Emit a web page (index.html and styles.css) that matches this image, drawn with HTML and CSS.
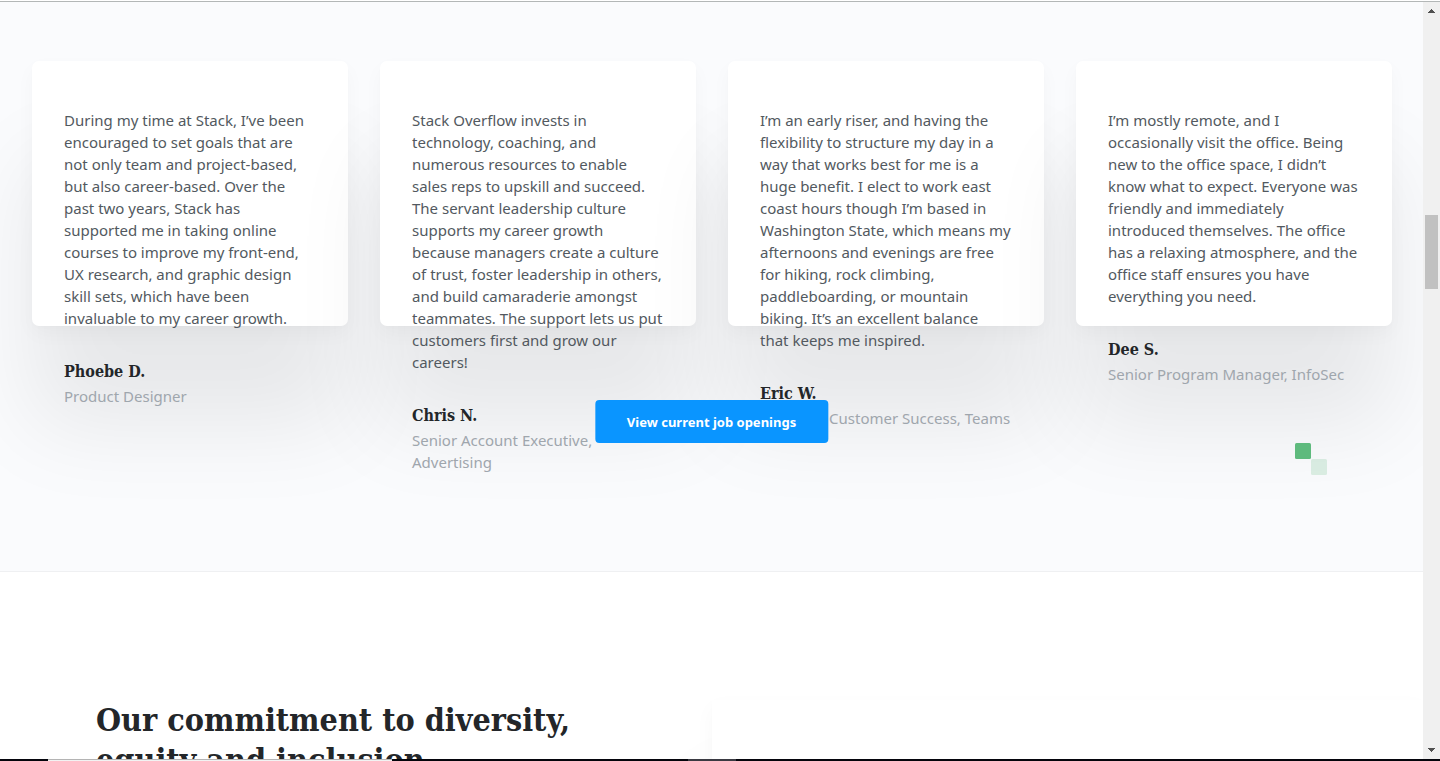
FILE: index.html
```html
<!DOCTYPE html>
<html lang="en">
<head>
<meta charset="utf-8">
<title>Working at Stack Overflow</title>
<link rel="stylesheet" href="styles.css">
</head>
<body>
<div class="window">
  <main class="page">
    <section class="testimonials">
      <ul class="cards">
        <li class="card">
          <p class="quote">During my time at Stack, I’ve been<br>encouraged to set goals that are<br>not only team and project-based,<br>but also career-based. Over the<br>past two years, Stack has<br>supported me in taking online<br>courses to improve my front-end,<br>UX research, and graphic design<br>skill sets, which have been<br>invaluable to my career growth.</p>
          <h3 class="name">Phoebe D.</h3>
          <p class="role">Product Designer</p>
        </li>
        <li class="card">
          <p class="quote">Stack Overflow invests in<br>technology, coaching, and<br>numerous resources to enable<br>sales reps to upskill and succeed.<br>The servant leadership culture<br>supports my career growth<br>because managers create a culture<br>of trust, foster leadership in others,<br>and build camaraderie amongst<br>teammates. The support lets us put<br>customers first and grow our<br>careers!</p>
          <h3 class="name">Chris N.</h3>
          <p class="role">Senior Account Executive,<br>Advertising</p>
        </li>
        <li class="card">
          <p class="quote">I’m an early riser, and having the<br>flexibility to structure my day in a<br>way that works best for me is a<br>huge benefit. I elect to work east<br>coast hours though I’m based in<br>Washington State, which means my<br>afternoons and evenings are free<br>for hiking, rock climbing,<br>paddleboarding, or mountain<br>biking. It’s an excellent balance<br>that keeps me inspired.</p>
          <h3 class="name">Eric W.</h3>
          <p class="role">Manager, Customer Success, Teams</p>
        </li>
        <li class="card">
          <p class="quote">I’m mostly remote, and I<br>occasionally visit the office. Being<br>new to the office space, I didn’t<br>know what to expect. Everyone was<br>friendly and immediately<br>introduced themselves. The office<br>has a relaxing atmosphere, and the<br>office staff ensures you have<br>everything you need.</p>
          <h3 class="name">Dee S.</h3>
          <p class="role">Senior Program Manager, InfoSec</p>
        </li>
      </ul>
      <a class="button" href="#openings">View current job openings</a>
      <svg class="squares" width="32" height="32" viewBox="0 0 32 32" aria-hidden="true">
        <rect width="16" height="16" rx="1.5" fill="#5eba7d"/>
        <rect x="16" y="16" width="16" height="16" rx="1.5" fill="#5eba7d" opacity=".2"/>
      </svg>
    </section>
    <section class="commitment">
      <h2 class="headline">Our commitment to diversity,<br>equity and inclusion</h2>
      <div class="panel"></div>
    </section>
  </main>
  <div class="scrollbar" aria-hidden="true">
    <svg class="arrow" width="7" height="4" viewBox="0 0 7 4"><path d="M3 0h1v1h1v1h1v1h1v1H0V3h1V2h1V1h1z"/></svg>
    <div class="track"><div class="thumb"></div></div>
    <svg class="arrow" width="7" height="4" viewBox="0 0 7 4"><path d="M0 0h7v1H6v1H5v1H4v1H3V3H2V2H1V1H0z"/></svg>
  </div>
</div>
<div class="taskbar" aria-hidden="true">
  <div class="search"></div>
  <div class="task"></div>
</div>
</body>
</html>
```
FILE: styles.css
```css
* { box-sizing: border-box; }

body {
  margin: 0;
  height: 100vh;
  display: flex;
  flex-direction: column;
  overflow: hidden;
  font-family: "Noto Sans", sans-serif;
  font-size: 15px;
  line-height: 22px;
  color: #525960;
  background: #fff;
}

.window {
  flex: 1;
  min-height: 0;
  display: flex;
  border-top: 1px solid #fff;
}

.page {
  flex: 1;
  min-width: 0;
  overflow: hidden;
  border-top: 1px solid #b3b7b7;
}

.testimonials {
  position: relative;
  padding: 59px 31px 245px 32px;
  background: #fafbfd;
  border-bottom: 1px solid #eff0f2;
}

.cards {
  display: grid;
  grid-template-columns: repeat(4, minmax(0, 1fr));
  gap: 32px;
  margin: 0;
  padding: 0;
  list-style: none;
}

.card {
  height: 265px;
  padding: 48px 32px;
  white-space: nowrap;
  background: #fff;
  border-radius: 7px;
}

.card,
.panel {
  box-shadow:
    0 2px 4px rgba(0, 0, 0, .01),
    0 8px 20px rgba(0, 0, 0, .03),
    0 100px 90px rgba(0, 0, 0, .08);
}

.quote { margin: 0 0 32px; }

.name {
  margin: 0;
  font-family: "DejaVu Serif Condensed", "DejaVu Serif", serif;
  font-size: 16px;
  line-height: 22px;
  color: #232629;
}

.role {
  margin: 2px 0 0;
  color: #9fa6ad;
}

.button {
  position: absolute;
  left: 50%;
  bottom: 128px;
  transform: translateX(-50%);
  padding: 11px 32px 10px;
  font-size: 13px;
  font-weight: 700;
  white-space: nowrap;
  color: #fff;
  text-decoration: none;
  background: #0a95ff;
  border-radius: 4px;
}

.squares {
  position: absolute;
  right: 96px;
  bottom: 96px;
}

.commitment {
  display: grid;
  grid-template-columns: 1fr 1fr;
  padding-top: 128px;
}

.headline {
  margin: 0;
  padding-left: 96px;
  font-family: "DejaVu Serif Condensed", "DejaVu Serif", serif;
  font-size: 32px;
  line-height: 40px;
  white-space: nowrap;
  color: #232629;
}

.panel {
  height: 320px;
  background: #fff;
}

.scrollbar {
  width: 17px;
  display: flex;
  flex-direction: column;
  align-items: center;
  padding: 7px 0;
  background: #f0f0f0;
  border-top: 1px solid #b3b7b7;
}

.arrow { fill: #505050; }

.track {
  flex: 1;
  width: 13px;
  padding-top: 202px;
}

.thumb {
  height: 74px;
  background: #c1c1c1;
}

.taskbar {
  height: 2px;
  display: flex;
  gap: 296px;
  padding-left: 48px;
  background: #04050c;
}

.search {
  width: 344px;
  background: #f2f2f2;
  border-top: 1px solid #b4b4b4;
}

.task {
  width: 48px;
  background: #3a3a42;
}
```
